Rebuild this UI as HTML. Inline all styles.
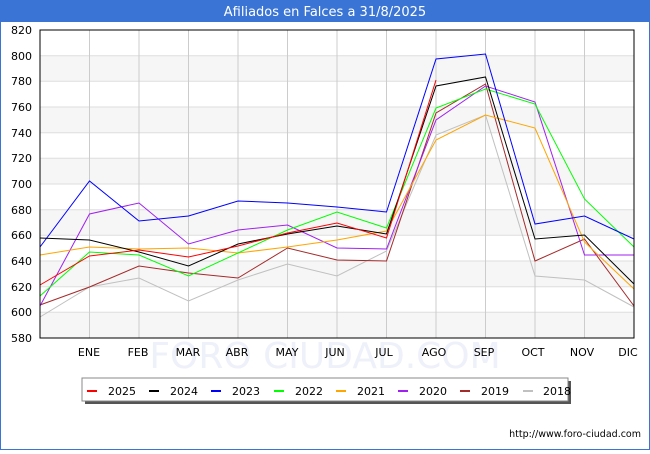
<!DOCTYPE html><html><head><style>body{margin:0;width:650px;height:450px;overflow:hidden;font-family:"DejaVu Sans","Liberation Sans",sans-serif;}</style></head><body>
<svg width="650" height="450" xmlns="http://www.w3.org/2000/svg" font-family="DejaVu Sans, Liberation Sans, sans-serif">
<rect x="0" y="0" width="650" height="450" fill="#fff"/>
<rect x="0.5" y="0.5" width="649" height="449" fill="none" stroke="#3a75d6"/>
<rect x="0" y="0" width="650" height="22" fill="#3a75d6"/>
<text x="325" y="16" fill="#fff" font-size="13" text-anchor="middle">Afiliados en Falces a 31/8/2025</text>
<g fill="#f6f6f6"><rect x="40" y="55.7" width="594" height="25.7"/><rect x="40" y="107" width="594" height="25.7"/><rect x="40" y="158.3" width="594" height="25.7"/><rect x="40" y="209.7" width="594" height="25.7"/><rect x="40" y="261" width="594" height="25.7"/><rect x="40" y="312.3" width="594" height="25.7"/></g>
<g stroke="#ddd" stroke-width="1"><path d="M40 55.7H634M40 81.3H634M40 107H634M40 132.7H634M40 158.3H634M40 184H634M40 209.7H634M40 235.3H634M40 261H634M40 286.7H634M40 312.3H634"/></g>
<g stroke="#ccc"><path d="M89.5 30V338M139 30V338M188.5 30V338M238 30V338M287.5 30V338M337 30V338M386.5 30V338M436 30V338M485.5 30V338M535 30V338M584.5 30V338"/></g>
<text x="325" y="368" font-size="36" fill="#eef0fa" text-anchor="middle">FORO CIUDAD.COM</text>
<g font-size="11" fill="#000" text-anchor="end"><text x="32" y="34">820</text><text x="32" y="60">800</text><text x="32" y="85">780</text><text x="32" y="111">760</text><text x="32" y="137">740</text><text x="32" y="162">720</text><text x="32" y="188">700</text><text x="32" y="214">680</text><text x="32" y="239">660</text><text x="32" y="265">640</text><text x="32" y="291">620</text><text x="32" y="316">600</text><text x="32" y="342">580</text></g>
<g font-size="11" fill="#000" text-anchor="middle"><text x="89" y="356">ENE</text><text x="138" y="356">FEB</text><text x="188" y="356">MAR</text><text x="237" y="356">ABR</text><text x="287" y="356">MAY</text><text x="335" y="356">JUN</text><text x="384" y="356">JUL</text><text x="434" y="356">AGO</text><text x="484" y="356">SEP</text><text x="533" y="356">OCT</text><text x="582" y="356">NOV</text><text x="628" y="356">DIC</text></g>
<g fill="none" stroke-width="1">
<polyline stroke="#c0c0c0" points="40,317 89.5,287 139,278 188.5,301 238,280 287.5,264 337,276 386.5,251 436,135 485.5,115 535,276 584.5,280 634,307"/>
<polyline stroke="#a52a2a" points="40,305 89.5,287 139,266 188.5,273 238,278 287.5,248 337,260 386.5,261 436,113 485.5,84 535,261 584.5,239 634,306"/>
<polyline stroke="#a020f0" points="40,306 89.5,214 139,203 188.5,244 238,230 287.5,225 337,248 386.5,249 436,120 485.5,86 535,102 584.5,255 634,255"/>
<polyline stroke="#ffa500" points="40,255 89.5,247 139,249 188.5,248 238,253 287.5,247 337,240 386.5,231 436,140 485.5,115 535,128 584.5,242 634,289"/>
<polyline stroke="#00ff00" points="40,296 89.5,252 139,255 188.5,276 238,253 287.5,230 337,212 386.5,228 436,108 485.5,89 535,104 584.5,199 634,247"/>
<polyline stroke="#0000ff" points="40,247 89.5,181 139,221 188.5,216 238,201 287.5,203 337,207 386.5,212 436,59 485.5,54 535,224 584.5,216 634,239"/>
<polyline stroke="#000" points="40,238 89.5,240 139,252 188.5,266 238,244 287.5,234 337,226 386.5,234 436,86 485.5,77 535,239 584.5,235 634,284"/>
<polyline stroke="#ff0000" points="40,285 89.5,256 139,250 188.5,257 238,246 287.5,233 337,223 386.5,238 436,80"/>
</g>
<rect x="40" y="30" width="594" height="308" fill="none" stroke="#000"/>
<rect x="85" y="381" width="486" height="23" fill="#555"/>
<rect x="82" y="378" width="486" height="23" fill="#fff" stroke="#888"/>
<g stroke-width="2"><path d="M87 391h10" stroke="#f00"/><path d="M149 391h10" stroke="#000"/><path d="M211 391h10" stroke="#00f"/><path d="M274 391h10" stroke="#0f0"/><path d="M336 391h10" stroke="#ffa500"/><path d="M398 391h10" stroke="#a020f0"/><path d="M460 391h10" stroke="#a52a2a"/><path d="M523 391h10" stroke="#c0c0c0"/></g>
<g font-size="11" fill="#000"><text x="108" y="395">2025</text><text x="170" y="395">2024</text><text x="232" y="395">2023</text><text x="295" y="395">2022</text><text x="357" y="395">2021</text><text x="419" y="395">2020</text><text x="481" y="395">2019</text><text x="543" y="395">2018</text></g>
<text x="641" y="437" font-size="9.5" fill="#000" text-anchor="end">http://www.foro-ciudad.com</text>
</svg></body></html>
